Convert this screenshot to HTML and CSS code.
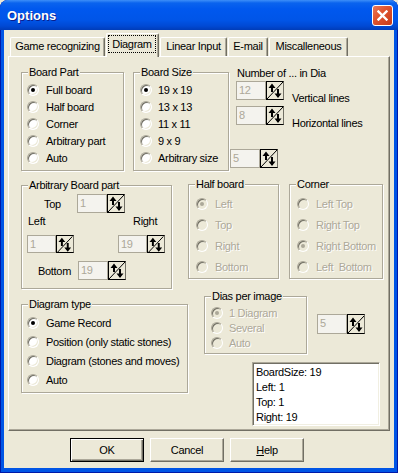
FILE: index.html
```html
<!DOCTYPE html>
<html>
<head>
<meta charset="utf-8">
<title>Options</title>
<link rel="stylesheet" href="styles.css">
</head>
<body>
<svg class="defs" width="0" height="0">
  <symbol id="spinarrows" viewBox="0 0 16 17">
    <path d="M0 17L16 0" stroke="#000" stroke-width="1" fill="none"/>
    <path d="M5 4v6M11 7v6" stroke="#000" stroke-width="2" fill="none"/>
    <path d="M1.5 6L5 1.5 8.5 6z M7.5 11.5L11 16 14.5 11.5z" fill="#000"/>
  </symbol>
</svg>

<div class="window">
  <div class="titlebar">
    <span class="title">Options</span>
    <span class="close">
      <svg width="11" height="11" viewBox="0 0 11 11"><path d="M1.5 1.5l8 8M9.5 1.5l-8 8" stroke="#fff" stroke-width="2.4" stroke-linecap="square"/></svg>
    </span>
  </div>

  <div class="client">
    <div class="tabs">
      <div class="tab w1">Game recognizing</div>
      <div class="tab w2 active"><span class="focus">Diagram</span></div>
      <div class="tab w3">Linear Input</div>
      <div class="tab w4">E-mail</div>
      <div class="tab w5">Miscalleneous</div>
    </div>

    <div class="panel">
      <!-- first row: board part / size / numbers -->
      <div class="row row1">
        <div class="group g-part">
          <span class="legend">Board Part</span>
          <div class="opt"><span class="radio on"></span>Full board</div>
          <div class="opt"><span class="radio"></span>Half board</div>
          <div class="opt"><span class="radio"></span>Corner</div>
          <div class="opt"><span class="radio"></span>Arbitrary part</div>
          <div class="opt"><span class="radio"></span>Auto</div>
        </div>
        <div class="group g-size">
          <span class="legend">Board Size</span>
          <div class="opt"><span class="radio on"></span>19 x 19</div>
          <div class="opt"><span class="radio"></span>13 x 13</div>
          <div class="opt"><span class="radio"></span>11 x 11</div>
          <div class="opt"><span class="radio"></span>9 x 9</div>
          <div class="opt"><span class="radio"></span>Arbitrary size</div>
        </div>
        <div class="numcol">
          <div class="numlabel">Number of ... in Dia</div>
          <div class="numrow">
            <div class="spin"><span class="edit">12</span><span class="sbtn"><svg width="16" height="17"><use href="#spinarrows"/></svg></span></div>
            <span class="numtext">Vertical lines</span>
          </div>
          <div class="numrow">
            <div class="spin"><span class="edit">8</span><span class="sbtn"><svg width="16" height="17"><use href="#spinarrows"/></svg></span></div>
            <span class="numtext">Horizontal lines</span>
          </div>
          <div class="spin arbsize"><span class="edit">5</span><span class="sbtn"><svg width="16" height="17"><use href="#spinarrows"/></svg></span></div>
        </div>
      </div>

      <!-- second row: arbitrary part, half board, corner -->
      <div class="row row2">
        <div class="group g-arb">
          <span class="legend">Arbitrary Board part</span>
          <div class="arb-top">
            <span class="lbl-top">Top</span>
            <div class="spin"><span class="edit">1</span><span class="sbtn"><svg width="16" height="17"><use href="#spinarrows"/></svg></span></div>
          </div>
          <div class="arb-lr">
            <span class="lbl-left">Left</span>
            <span>Right</span>
          </div>
          <div class="arb-spins">
            <div class="spin"><span class="edit">1</span><span class="sbtn"><svg width="16" height="17"><use href="#spinarrows"/></svg></span></div>
            <div class="spin"><span class="edit">19</span><span class="sbtn"><svg width="16" height="17"><use href="#spinarrows"/></svg></span></div>
          </div>
          <div class="arb-bottom">
            <span class="lbl-bottom">Bottom</span>
            <div class="spin"><span class="edit">19</span><span class="sbtn"><svg width="16" height="17"><use href="#spinarrows"/></svg></span></div>
          </div>
        </div>
        <div class="group g-half off">
          <span class="legend">Half board</span>
          <div class="opt"><span class="radio on"></span>Left</div>
          <div class="opt"><span class="radio"></span>Top</div>
          <div class="opt"><span class="radio"></span>Right</div>
          <div class="opt"><span class="radio"></span>Bottom</div>
        </div>
        <div class="group g-corner off">
          <span class="legend">Corner</span>
          <div class="opt"><span class="radio"></span>Left Top</div>
          <div class="opt"><span class="radio"></span>Right Top</div>
          <div class="opt"><span class="radio on"></span>Right Bottom</div>
          <div class="opt"><span class="radio"></span>Left&nbsp; Bottom</div>
        </div>
      </div>

      <!-- third row: diagram type, dias per image, info box -->
      <div class="row row3">
        <div class="group g-type">
          <span class="legend">Diagram type</span>
          <div class="opt"><span class="radio on"></span>Game Record</div>
          <div class="opt"><span class="radio"></span>Position (only static stones)</div>
          <div class="opt"><span class="radio"></span>Diagram (stones and moves)</div>
          <div class="opt"><span class="radio"></span>Auto</div>
        </div>
        <div class="rightcol">
          <div class="dias-row">
            <div class="group g-dias off">
              <span class="legend">Dias per image</span>
              <div class="opt"><span class="radio on"></span>1 Diagram</div>
              <div class="opt"><span class="radio"></span>Several</div>
              <div class="opt"><span class="radio"></span>Auto</div>
            </div>
            <div class="spin dias-spin"><span class="edit">5</span><span class="sbtn"><svg width="16" height="17"><use href="#spinarrows"/></svg></span></div>
          </div>
          <div class="memo">BoardSize: 19<br>Left: 1<br>Top: 1<br>Right: 19</div>
        </div>
      </div>
    </div>

    <div class="buttons">
      <div class="button default">OK</div>
      <div class="button">Cancel</div>
      <div class="button"><u>H</u>elp</div>
    </div>
  </div>
</div>
</body>
</html>
```

FILE: styles.css
```css
*{
	margin:0;
	padding:0;
	box-sizing:border-box;
}
body{
	width:398px;
	height:473px;
	overflow:hidden;
	background:#ECE9D8;
	font-family:"Liberation Sans", Arial, sans-serif;
	font-size:11px;
	letter-spacing:-0.3px;
	color:#000;
}
.defs{
	position:absolute;
}

/* window frame */
.window{
	width:398px;
	height:473px;
	display:flex;
	flex-direction:column;
	background:#0055E5;
	border-radius:8px 8px 0 0;
	overflow:hidden;
	box-shadow:inset 1px 0 #0019A8, inset -1px 0 #0019A8, inset 0 -1px #0019A8;
}
.titlebar{
	height:30px;
	flex:none;
	display:flex;
	align-items:center;
	justify-content:space-between;
	padding:0 5px 0 7px;
	background:linear-gradient(to bottom, #3D8FF8 0, #0A63EE 3px, #0058EE 9px, #0055E8 20px, #0049D4 26px, #003CB8 30px);
}
.title{
	color:#fff;
	font-weight:bold;
	font-size:13px;
	letter-spacing:0;
	text-shadow:1px 1px 0 #0A1E8C;
	padding-top:1px;
}
.close{
	width:21px;
	height:21px;
	border:1px solid #fff;
	border-radius:3px;
	display:flex;
	align-items:center;
	justify-content:center;
	background:linear-gradient(135deg, #E8795A 0, #E05530 40%, #C73A18 100%);
	margin-top:1px;
}
.client{
	flex:1;
	margin:0 4px 5px 4px;
	background:#ECE9D8;
}

/* tabs */
.tabs{
	height:26px;
	display:flex;
	align-items:flex-end;
	gap:1px;
	padding-left:6px;
}
.tab{
	height:19px;
	text-align:center;
	line-height:13px;
	padding-top:2px;
	background:#ECE9D8;
	border-top:1px solid #fff;
	border-left:1px solid #fff;
	border-right:1px solid #716F64;
	border-radius:2px 2px 0 0;
	box-shadow:inset -1px 0 #ACA899;
}
.tab.active{
	height:24px;
	margin-bottom:-1px;
	padding:1px 2px 0 1px;
	position:relative;
	z-index:1;
}
.focus{
	display:block;
	height:18px;
	line-height:16px;
	border:1px dotted #000;
}
.w1{ width:95px; }
.w2{ width:53px; }
.w3{ width:67px; }
.w4{ width:40px; }
.w5{ width:79px; }

/* tab page */
.panel{
	margin-left:4px;
	width:382px;
	height:375px;
	border:1px solid;
	border-color:#fff #716F64 #716F64 #fff;
	box-shadow:inset -1px -1px #ACA899;
}
.row{
	display:flex;
	align-items:flex-start;
}
.row1{ margin-top:9px; }
.row2{ margin-top:13px; }
.row3{ margin-top:7px; }

.group{
	position:relative;
	border:1px solid #ACA899;
	box-shadow:inset 1px 1px #fff, 1px 1px #fff;
	padding:8px 0 0 5px;
}
.legend{
	position:absolute;
	top:-7px;
	left:6px;
	padding:0 1px;
	line-height:13px;
	background:#ECE9D8;
}
.opt{
	display:flex;
	align-items:center;
	height:17px;
	white-space:nowrap;
}
.radio{
	width:12px;
	height:12px;
	flex:none;
	margin-right:7px;
	border-radius:50%;
	border:1px solid;
	border-color:#ACA899 #fff #fff #ACA899;
	background:#fff;
	box-shadow:inset 1px 1px #716F64, inset -1px -1px #ECE9D8;
	display:flex;
	align-items:center;
	justify-content:center;
}
.radio.on::after{
	content:"";
	width:4px;
	height:4px;
	border-radius:50%;
	background:#000;
}
.off .opt{
	color:#ACA899;
	text-shadow:1px 1px 0 #fff;
}
.off .radio{
	background:#ECE9D8;
}
.off .radio.on::after{
	background:#ACA899;
}

.g-part{ margin-left:12px; margin-top:6px; width:103px; height:99px; }
.g-size{ margin-left:9px; margin-top:6px; width:96px; height:99px; padding-left:6px; }
.g-size .radio{ margin-right:6px; }

.numcol{ margin-left:1px; }
.numlabel{ margin-left:7px; line-height:13px; padding-top:1px; }
.numrow{ display:flex; margin-left:6px; margin-top:1px; }
.numtext{ margin-left:8px; padding-top:11px; line-height:13px; }
.arbsize{ margin-top:19px; height:18px; }

/* spin edit */
.spin{
	display:flex;
	width:48px;
	height:19px;
}
.edit{
	width:30px;
	border:1px solid #ACA899;
	background:#F4F3EE;
	color:#ACA899;
	padding-left:2px;
	line-height:16px;
}
.sbtn{
	width:18px;
	border:1px solid #000;
	border-right-color:#716F64;
	background:#ECE9D8;
	display:flex;
	align-items:center;
	justify-content:center;
	overflow:hidden;
}

.g-arb{ margin-left:12px; margin-top:1px; width:151px; height:104px; padding:8px 0 0 0; }
.arb-top{ display:flex; align-items:center; }
.lbl-top{ margin-left:22px; width:33px; }
.arb-lr{ display:flex; margin-top:2px; line-height:13px; }
.lbl-left{ margin-left:6px; width:105px; }
.arb-spins{ display:flex; margin-top:7px; margin-left:5px; gap:44px; }
.arb-spins .spin{ width:47px; height:18px; }
.arb-bottom{ display:flex; align-items:center; margin-top:8px; }
.lbl-bottom{ margin-left:16px; width:40px; }

.g-half{ margin-left:16px; width:91px; height:95px; padding-left:7px; }
.g-corner{ margin-left:10px; width:94px; height:95px; padding-left:7px; }
.g-half .opt, .g-corner .opt{ height:21px; }

.g-type{ margin-left:12px; margin-top:8px; width:167px; height:89px; }
.g-type .opt{ height:19px; }

.rightcol{ margin-left:16px; }
.dias-row{ display:flex; align-items:flex-start; }
.g-dias{ width:103px; height:58px; padding-left:6px; }
.g-dias .opt{ height:15px; }
.g-dias .radio{ margin-right:6px; }
.dias-spin{ margin-left:10px; margin-top:18px; height:20px; }

.memo{
	margin-left:48px;
	margin-top:8px;
	width:128px;
	height:64px;
	background:#fff;
	border:1px solid;
	border-color:#ACA899 #fff #fff #ACA899;
	box-shadow:inset 1px 1px #716F64, inset -1px -1px #F1EFE2;
	padding:2px 0 0 3px;
	line-height:15px;
}

/* dialog buttons */
.buttons{
	display:flex;
	gap:6px;
	margin-top:7px;
	padding-left:66px;
}
.button{
	width:74px;
	height:24px;
	line-height:22px;
	text-align:center;
	border:1px solid;
	border-color:#fff #716F64 #716F64 #fff;
	box-shadow:inset -1px -1px #ACA899;
}
.button.default{
	border-color:#000;
	box-shadow:inset 1px 1px #fff, inset -1px -1px #716F64, inset -2px -2px #ACA899;
}
```
